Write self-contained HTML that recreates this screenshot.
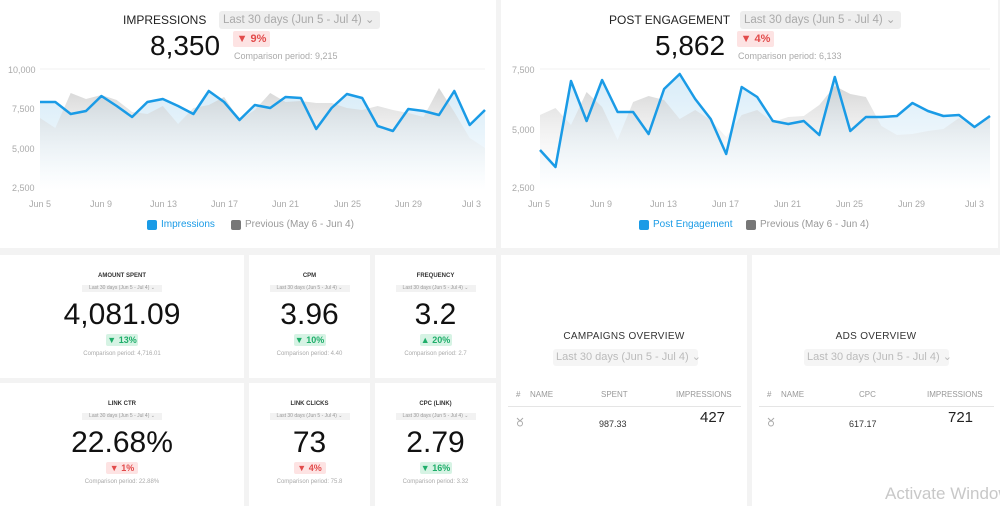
<!DOCTYPE html>
<html><head><meta charset="utf-8"><style>
*{margin:0;padding:0;box-sizing:border-box}
body{width:1000px;height:506px;background:#f3f3f3;font-family:"Liberation Sans",sans-serif;position:relative;overflow:hidden}
.card{position:absolute;background:#fff}
.abs{position:absolute;white-space:nowrap}
.dd{position:absolute;background:#eee;color:#aaa;border-radius:3px;white-space:nowrap}
.badge{position:absolute;border-radius:2px;font-weight:bold;text-align:center}
.red{background:#fde3e3;color:#e24b4b}
.grn{background:#d6f3e4;color:#1fae6a}
.c{text-align:center}
.ax{font-size:9px;color:#aaa;position:absolute}
</style></head><body>

<div class="card" style="left:0;top:0;width:496px;height:248px">
 <div class="abs" style="left:123px;top:13px;font-size:12px;color:#222">IMPRESSIONS</div>
 <div class="dd" style="left:219px;top:11px;width:161px;height:18px;font-size:11.5px;line-height:18px;padding-left:4px">Last 30 days (Jun 5 - Jul 4) ⌄</div>
 <div class="abs" style="left:150px;top:30px;font-size:28px;color:#111">8,350</div>
 <div class="badge red" style="left:233px;top:31px;width:37px;height:16px;font-size:11px;line-height:16px">▼ 9%</div>
 <div class="abs" style="left:234px;top:51px;font-size:9px;color:#aaa">Comparison period: 9,215</div>
 <div class="ax" style="left:8px;top:65px">10,000</div>
 <div class="ax" style="left:12px;top:104px">7,500</div>
 <div class="ax" style="left:12px;top:144px">5,000</div>
 <div class="ax" style="left:12px;top:183px">2,500</div>
 <svg class="abs" style="left:0;top:0" width="496" height="248" id="s1"></svg>
 <div class="ax" style="left:29px;top:199px">Jun 5</div><div class="ax" style="left:90px;top:199px">Jun 9</div><div class="ax" style="left:150px;top:199px">Jun 13</div><div class="ax" style="left:211px;top:199px">Jun 17</div><div class="ax" style="left:272px;top:199px">Jun 21</div><div class="ax" style="left:334px;top:199px">Jun 25</div><div class="ax" style="left:395px;top:199px">Jun 29</div><div class="ax" style="left:462px;top:199px">Jul 3</div>
 <div class="abs" style="left:147px;top:220px;width:10px;height:10px;background:#1a9be6;border-radius:2px"></div>
 <div class="abs" style="left:161px;top:219px;font-size:10px;color:#1a9be6">Impressions</div>
 <div class="abs" style="left:231px;top:220px;width:10px;height:10px;background:#777;border-radius:2px"></div>
 <div class="abs" style="left:245px;top:219px;font-size:10px;color:#999">Previous (May 6 - Jun 4)</div>
</div>

<div class="card" style="left:501px;top:0;width:497px;height:248px">
 <div class="abs" style="left:108px;top:13px;font-size:12px;color:#222">POST ENGAGEMENT</div>
 <div class="dd" style="left:239px;top:11px;width:161px;height:18px;font-size:11.5px;line-height:18px;padding-left:4px">Last 30 days (Jun 5 - Jul 4) ⌄</div>
 <div class="abs" style="left:154px;top:30px;font-size:28px;color:#111">5,862</div>
 <div class="badge red" style="left:236px;top:31px;width:37px;height:16px;font-size:11px;line-height:16px">▼ 4%</div>
 <div class="abs" style="left:237px;top:51px;font-size:9px;color:#aaa">Comparison period: 6,133</div>
 <div class="ax" style="left:11px;top:65px">7,500</div>
 <div class="ax" style="left:11px;top:125px">5,000</div>
 <div class="ax" style="left:11px;top:183px">2,500</div>
 <svg class="abs" style="left:0;top:0" width="497" height="248" id="s2"></svg>
 <div class="ax" style="left:27px;top:199px">Jun 5</div><div class="ax" style="left:89px;top:199px">Jun 9</div><div class="ax" style="left:149px;top:199px">Jun 13</div><div class="ax" style="left:211px;top:199px">Jun 17</div><div class="ax" style="left:273px;top:199px">Jun 21</div><div class="ax" style="left:335px;top:199px">Jun 25</div><div class="ax" style="left:397px;top:199px">Jun 29</div><div class="ax" style="left:464px;top:199px">Jul 3</div>
 <div class="abs" style="left:138px;top:220px;width:10px;height:10px;background:#1a9be6;border-radius:2px"></div>
 <div class="abs" style="left:152px;top:219px;font-size:10px;color:#1a9be6">Post Engagement</div>
 <div class="abs" style="left:245px;top:220px;width:10px;height:10px;background:#777;border-radius:2px"></div>
 <div class="abs" style="left:259px;top:219px;font-size:10px;color:#999">Previous (May 6 - Jun 4)</div>
</div>

<div id="kpis"></div>

<div class="card" style="left:501px;top:255px;width:246px;height:251px">
 <div class="abs c" style="left:0;top:76px;width:246px;font-size:10px;color:#333;letter-spacing:.3px">CAMPAIGNS OVERVIEW</div>
 <div class="dd" style="left:52px;top:94px;width:145px;height:17px;font-size:11px;line-height:17px;padding-left:3px;background:#f5f5f5;color:#bbb">Last 30 days (Jun 5 - Jul 4) ⌄</div>
 <div class="abs" style="left:15px;top:135px;font-size:8px;color:#999">#</div>
 <div class="abs" style="left:29px;top:135px;font-size:8px;color:#999">NAME</div>
 <div class="abs" style="left:100px;top:135px;font-size:8px;color:#999">SPENT</div>
 <div class="abs" style="left:175px;top:135px;font-size:8px;color:#999">IMPRESSIONS</div>
 <div class="abs" style="left:7px;top:151px;width:233px;height:1px;background:#e5e5e5"></div>
 <svg class="abs" style="left:15px;top:162px" width="8" height="10"><path d="M1 1 L4 4 L7 1 M4 4 V4" stroke="#aaa" fill="none"/><circle cx="4" cy="6.5" r="2.5" stroke="#aaa" fill="none"/></svg>
 <div class="abs" style="left:98px;top:164px;font-size:9px;color:#333">987.33</div>
 <div class="abs" style="left:199px;top:154px;font-size:15px;color:#222">427</div>
</div>
<div class="card" style="left:752px;top:255px;width:248px;height:251px">
 <div class="abs c" style="left:0;top:76px;width:248px;font-size:10px;color:#333;letter-spacing:.3px">ADS OVERVIEW</div>
 <div class="dd" style="left:52px;top:94px;width:145px;height:17px;font-size:11px;line-height:17px;padding-left:3px;background:#f5f5f5;color:#bbb">Last 30 days (Jun 5 - Jul 4) ⌄</div>
 <div class="abs" style="left:15px;top:135px;font-size:8px;color:#999">#</div>
 <div class="abs" style="left:29px;top:135px;font-size:8px;color:#999">NAME</div>
 <div class="abs" style="left:107px;top:135px;font-size:8px;color:#999">CPC</div>
 <div class="abs" style="left:175px;top:135px;font-size:8px;color:#999">IMPRESSIONS</div>
 <div class="abs" style="left:7px;top:151px;width:235px;height:1px;background:#e5e5e5"></div>
 <svg class="abs" style="left:15px;top:162px" width="8" height="10"><path d="M1 1 L4 4 L7 1" stroke="#aaa" fill="none"/><circle cx="4" cy="6.5" r="2.5" stroke="#aaa" fill="none"/></svg>
 <div class="abs" style="left:97px;top:164px;font-size:9px;color:#333">617.17</div>
 <div class="abs" style="left:196px;top:154px;font-size:15px;color:#222">721</div>
 <div class="abs" style="left:133px;top:229px;font-size:17px;color:#c8c8c8">Activate Windows</div>
</div>

<script>
function chart(id,x0,x1,line,prev,base){
 var s=document.getElementById(id),n=line.length,dx=(x1-x0)/(n-1);
 function pts(a){return a.map(function(v,i){return (x0+i*dx).toFixed(1)+','+v}).join(' ')}
 var h='<defs><linearGradient id="g'+id+'" x1="0" y1="0" x2="0" y2="1"><stop offset="0" stop-color="#d8ecf8"/><stop offset="1" stop-color="#fff"/></linearGradient>'+
 '<linearGradient id="p'+id+'" x1="0" y1="0" x2="0" y2="1"><stop offset="0" stop-color="#c8c8c8"/><stop offset="1" stop-color="#fff" stop-opacity="0"/></linearGradient></defs>';
 h+='<line x1="'+x0+'" x2="'+x1+'" y1="69" y2="69" stroke="#f0f0f0"/>';
 h+='<polygon points="'+x0+','+base+' '+pts(line)+' '+x1+','+base+'" fill="url(#g'+id+')"/>';
 h+='<polygon points="'+x0+','+base+' '+pts(prev)+' '+x1+','+base+'" fill="url(#p'+id+')" opacity=".75"/>';
 h+='<polyline points="'+pts(line)+'" fill="none" stroke="#1a9be6" stroke-width="2.5" stroke-linejoin="round"/>';
 s.innerHTML=h;
}
chart('s1',40,485,[102,102,114,111,96,106,117,102,99,106,114,91,102,120,105,108,97,98,129,108,94,98,126,131,109,111,115,91,125,110],
 [118,128,93,99,95,100,112,114,106,124,108,105,97,120,110,93,102,101,103,103,108,110,106,110,113,117,88,112,138,148],190);
chart('s2',39,489,[150,167,81,121,80,112,112,134,89,74,99,119,154,87,97,121,124,121,135,77,131,117,117,116,103,111,116,115,127,116],
 [115,108,125,92,107,140,102,96,100,119,110,120,137,115,110,122,117,116,105,86,94,97,126,135,134,131,129,118,128,116],190);
var k=[
[0,255,244,123,'AMOUNT SPENT','4,081.09','▼ 13%','grn','4,716.01'],
[249,255,121,123,'CPM','3.96','▼ 10%','grn','4.40'],
[375,255,121,123,'FREQUENCY','3.2','▲ 20%','grn','2.7'],
[0,383,244,123,'LINK CTR','22.68%','▼ 1%','red','22.88%'],
[249,383,121,123,'LINK CLICKS','73','▼ 4%','red','75.8'],
[375,383,121,123,'CPC (LINK)','2.79','▼ 16%','grn','3.32']];
var o='';
k.forEach(function(a){
 var w=a[2];
 o+='<div class="card" style="left:'+a[0]+'px;top:'+a[1]+'px;width:'+w+'px;height:'+a[3]+'px">'+
 '<div class="abs c" style="left:0;width:'+w+'px;top:18px;font-size:6px;font-weight:bold;color:#333">'+a[4]+'</div>'+
 '<div class="abs c" style="left:'+(w/2-40)+'px;width:80px;top:30px;height:7px;background:#f2f2f2;font-size:5px;line-height:7px;color:#999">Last 30 days (Jun 5 - Jul 4) ⌄</div>'+
 '<div class="abs c" style="left:0;width:'+w+'px;top:43px;font-size:30px;color:#111">'+a[5]+'</div>'+
 '<div class="badge '+a[7]+'" style="left:'+(w/2-16)+'px;top:79px;width:32px;height:12px;font-size:9px;line-height:12px">'+a[6]+'</div>'+
 '<div class="abs c" style="left:0;width:'+w+'px;top:96px;font-size:6px;color:#aaa">Comparison period: '+a[8]+'</div></div>';
});
document.getElementById('kpis').innerHTML=o;
</script>
</body></html>
